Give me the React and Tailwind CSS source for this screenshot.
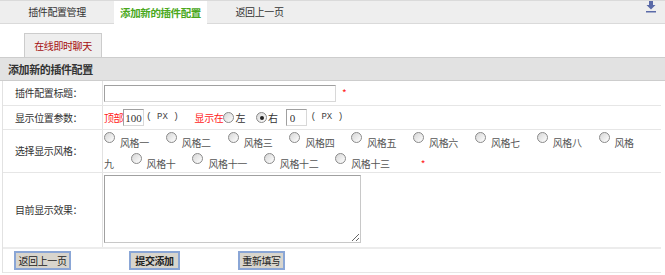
import { useState } from "react";

const Radio = ({ checked }) => (
  <span className="relative inline-block w-[11px] h-[11px] rounded-full border border-[#8a8a8a] bg-gradient-to-br from-[#d6d6d6] to-white align-[4px] mr-[3px]">
    {checked && <span className="absolute left-[2.5px] top-[2.5px] w-[4px] h-[4px] rounded-full bg-[#222]" />}
  </span>
);

const DownloadIcon = () => (
  <svg width="12" height="12" viewBox="0 0 12 12">
    <rect x="4" y="0" width="4" height="4" fill="#5a6aa8" />
    <path d="M1.5 4 H10.5 L6 8.5 Z" fill="#5a6aa8" />
    <rect x="1" y="10" width="10" height="1.5" fill="#5a6aa8" />
  </svg>
);

const styles = ["一", "二", "三", "四", "五", "六", "七", "八", "九", "十", "十一", "十二", "十三"];

export default function App() {
  const [side, setSide] = useState("right");

  return (
    <div className="w-[665px] h-[275px] bg-white overflow-hidden text-[10px] tracking-[-0.4px] text-[#333] font-['Noto_Sans_CJK_SC','Noto_Sans',sans-serif] leading-none whitespace-nowrap">
      {/* top tabs */}
      <div className="relative flex h-[24px] bg-[#eeeeee] border-t border-[#c4c4c4] border-b border-[#dadada]">
        <div className="w-[114px] flex items-center justify-center">插件配置管理</div>
        <div className="w-[93px] flex items-center justify-center bg-white text-[#4aa81c] font-bold h-[24px] text-[10.5px]">添加新的插件配置</div>
        <div className="w-[105px] flex items-center justify-center">返回上一页</div>
        <div className="absolute right-[8px] top-[0px]">
          <DownloadIcon />
        </div>
      </div>

      {/* sub tab */}
      <div className="h-[33px] pl-[24px] pt-[9px] flex items-end">
        <div className="w-[78px] h-[24px] bg-[#eeeeee] border border-b-0 border-[#cccccc] text-[#a50f0f] flex items-center justify-center">
          在线即时聊天
        </div>
      </div>

      {/* header */}
      <div className="h-[24px] bg-[#e2e2e2] border-t border-b border-[#cdcdcd] flex items-center pl-[8px] font-bold text-[11px] text-[#333]">
        添加新的插件配置
      </div>

      {/* form */}
      <div className="ml-[2px] w-[659px] border-l border-[#e2e2e2]">
        <div className="flex h-[25px] border-b border-[#e6e6e6]">
          <div className="w-[100px] border-r border-[#e2e2e2] flex items-center pl-[12px]">插件配置标题：</div>
          <div className="flex items-center pl-[1px]">
            <input className="w-[232px] h-[17px] border border-[#a0a0a0] border-r-[#d8d8d8] border-b-[#d8d8d8] outline-none" />
            <span className="ml-[6px] text-[#ff2020] text-[10px]">*</span>
          </div>
        </div>

        <div className="flex h-[24px] border-b border-[#e6e6e6]">
          <div className="w-[100px] border-r border-[#e2e2e2] flex items-center pl-[12px]">显示位置参数：</div>
          <div className="flex items-center pl-[1px]">
            <span className="text-[#ff1a1a]">顶部</span>
            <input defaultValue="100" className="w-[21px] h-[17px] border border-[#a0a0a0] border-r-[#d8d8d8] border-b-[#d8d8d8] outline-none text-[11px] tracking-normal font-['Liberation_Serif',serif] px-[1px]" />
            <span className="ml-[2px] text-[9px] tracking-normal text-[#444] font-['Liberation_Mono',monospace]">( PX )</span>
            <span className="ml-[16px] text-[#ff1a1a]">显示在</span>
            <span onClick={() => setSide("left")} className="flex items-center">
              <Radio checked={side === "left"} />
              <span className="-ml-[2px]">左</span>
            </span>
            <span onClick={() => setSide("right")} className="flex items-center ml-[11px]">
              <Radio checked={side === "right"} />
              <span className="-ml-[2px]">右</span>
            </span>
            <input defaultValue="0" className="ml-[8px] w-[21px] h-[17px] border border-[#a0a0a0] border-r-[#d8d8d8] border-b-[#d8d8d8] outline-none text-[11px] tracking-normal font-['Liberation_Serif',serif] px-[3px]" />
            <span className="ml-[4px] text-[9px] tracking-normal text-[#444] font-['Liberation_Mono',monospace]">( PX )</span>
          </div>
        </div>

        <div className="flex h-[43px] border-b border-[#e6e6e6]">
          <div className="w-[100px] border-r border-[#e2e2e2] flex items-center pl-[12px]">选择显示风格：</div>
          <div className="w-[550px] pl-[1px] pt-[2px] leading-[20px] text-[#555] whitespace-normal">
            {styles.map((s) => (
              <span key={s}>
                <Radio />
                <span className="pl-[2px] pr-[17px]">风格{s}</span>
              </span>
            ))}
            <span className="text-[#ff2020] text-[10px] ml-[14px]">*</span>
          </div>
        </div>

        <div className="flex h-[76px] border-b-2 border-[#ececec]">
          <div className="w-[100px] border-r border-[#e2e2e2] flex items-center pl-[12px]">目前显示效果：</div>
          <div className="pl-[1px] pt-[2px]">
            <textarea className="w-[257px] h-[68px] border border-[#a0a0a0] border-r-[#c8c8c8] border-b-[#c8c8c8] outline-none resize" />
          </div>
        </div>

        <div className="flex h-[24px] items-center border-b border-[#e6e6e6] text-[#222]">
          <button className="ml-[11px] w-[57px] h-[19px] bg-[#d8d5cd] border-2 border-[#8aa6d6] px-0">返回上一页</button>
          <button className="ml-[58px] w-[51px] h-[19px] bg-[#d8d5cd] border-2 border-[#8aa6d6] font-bold px-0">提交添加</button>
          <button className="ml-[58px] w-[47px] h-[19px] bg-[#d8d5cd] border-2 border-[#8aa6d6] px-0">重新填写</button>
        </div>
      </div>
    </div>
  );
}
